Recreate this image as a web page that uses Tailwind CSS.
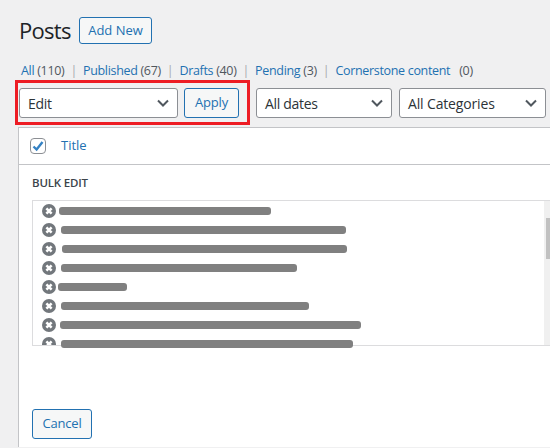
<!DOCTYPE html>
<html>
<head>
<meta charset="utf-8">
<title>Posts</title>
<script src="https://cdn.jsdelivr.net/npm/@tailwindcss/browser@4"></script>
</head>
<body class="w-[550px] h-[448px] overflow-hidden bg-[#f0f0f1] font-['Open_Sans',sans-serif] text-[13px] text-[#3c434a]">

  <div class="flex items-center h-[27px] mt-[17px] ml-[19px]">
    <h1 class="w-[60px] text-[22px] leading-[27px] text-[#1d2327] tracking-[-0.7px]">Posts</h1>
    <button class="w-[73px] h-[27px] border border-[#2271b1] rounded-[3px] bg-[#f6f7f7] text-[#2271b1] text-[13px] font-medium">Add New</button>
  </div>

  <ul class="flex items-center h-[18px] mt-[18px] ml-[21px] text-[12.5px] tracking-[-0.32px] text-[#50575e]">
    <li><a class="text-[#2271b1]">All</a> (110)<span class="mx-[6px] text-[#a7aaad]">|</span></li>
    <li><a class="text-[#2271b1]">Published</a> (67)<span class="mx-[6px] text-[#a7aaad]">|</span></li>
    <li><a class="text-[#2271b1]">Drafts</a> (40)<span class="mx-[6px] text-[#a7aaad]">|</span></li>
    <li><a class="text-[#2271b1]">Pending</a> (3)<span class="mx-[6px] text-[#a7aaad]">|</span></li>
    <li><a class="text-[#2271b1]">Cornerstone content</a><span class="ml-[9px]">(0)</span></li>
  </ul>

  <div class="flex items-start ml-[15px] w-[540px]">
    <div class="flex gap-[6px] shrink-0 w-[235px] h-[45px] border-[3px] border-[#ed1c24] pl-[1px] pt-[5px]">
      <div class="flex items-center justify-between w-[159px] h-[30px] pl-[8px] pr-[6px] bg-white border border-[#8c8f94] rounded-[3px] text-[#2c3338] text-[14px] tracking-[-0.3px]">
        <span>Edit</span>
        <svg width="16" height="16" viewBox="0 0 16 16" fill="none" stroke="#50575e" stroke-width="2"><path d="M3 5.5 8 10.5 13 5.5"/></svg>
      </div>
      <button class="w-[55px] h-[30px] border border-[#2271b1] rounded-[3px] bg-[#f6f7f7] text-[#2271b1] text-[13px] tracking-[-0.2px]">Apply</button>
    </div>
    <div class="flex items-center justify-between ml-[6px] mt-[8px] w-[136px] h-[30px] pl-[8px] pr-[6px] bg-white border border-[#8c8f94] rounded-[3px] text-[#2c3338] text-[14px] tracking-[-0.3px]">
      <span>All dates</span>
      <svg width="16" height="16" viewBox="0 0 16 16" fill="none" stroke="#50575e" stroke-width="2"><path d="M3 5.5 8 10.5 13 5.5"/></svg>
    </div>
    <div class="flex items-center justify-between ml-[7px] mt-[8px] w-[147px] h-[30px] pl-[8px] pr-[6px] bg-white border border-[#8c8f94] rounded-[3px] text-[#2c3338] text-[14px] tracking-[-0.15px]">
      <span>All Categories</span>
      <svg width="16" height="16" viewBox="0 0 16 16" fill="none" stroke="#50575e" stroke-width="2"><path d="M3 5.5 8 10.5 13 5.5"/></svg>
    </div>
  </div>

  <div class="mt-[2px] ml-[18px] w-[540px] h-[320px] bg-white border-t border-l border-[#c3c4c7]">
    <div class="flex items-center h-[37px] pl-[11px] border-b border-[#c3c4c7]">
      <span class="flex items-center justify-center w-[16px] h-[16px] bg-white border border-[#8c8f94] rounded-[4px]">
        <svg width="14" height="14" viewBox="0 0 14 14" fill="none" stroke="#3582c4" stroke-width="2.4"><path d="M2.5 7.5 5.6 10.5 11.5 3"/></svg>
      </span>
      <a class="ml-[15px] text-[#2271b1] text-[13px]">Title</a>
    </div>

    <h4 class="ml-[13px] mt-[9px] h-[18px] leading-[18px] text-[11.5px] font-semibold text-[#3c434a] tracking-[-0.2px]">BULK EDIT</h4>

    <div class="relative ml-[13px] mt-[8px] w-[530px] h-[146px]">
      <div class="h-full overflow-hidden border border-[#dcdcde] flex">
        <ul class="flex-1 flex flex-col gap-[5px] pl-[9px] pt-[3px]">
          <li class="h-[14px] shrink-0"><svg width="14" height="14" viewBox="0 0 14 14"><circle cx="7" cy="7" r="7" fill="#72777c"/><path d="M4.4 4.4 9.6 9.6M9.6 4.4 4.4 9.6" stroke="#fff" stroke-width="2.6"/></svg></li>
          <li class="h-[14px] shrink-0"><svg width="14" height="14" viewBox="0 0 14 14"><circle cx="7" cy="7" r="7" fill="#72777c"/><path d="M4.4 4.4 9.6 9.6M9.6 4.4 4.4 9.6" stroke="#fff" stroke-width="2.6"/></svg></li>
          <li class="h-[14px] shrink-0"><svg width="14" height="14" viewBox="0 0 14 14"><circle cx="7" cy="7" r="7" fill="#72777c"/><path d="M4.4 4.4 9.6 9.6M9.6 4.4 4.4 9.6" stroke="#fff" stroke-width="2.6"/></svg></li>
          <li class="h-[14px] shrink-0"><svg width="14" height="14" viewBox="0 0 14 14"><circle cx="7" cy="7" r="7" fill="#72777c"/><path d="M4.4 4.4 9.6 9.6M9.6 4.4 4.4 9.6" stroke="#fff" stroke-width="2.6"/></svg></li>
          <li class="h-[14px] shrink-0"><svg width="14" height="14" viewBox="0 0 14 14"><circle cx="7" cy="7" r="7" fill="#72777c"/><path d="M4.4 4.4 9.6 9.6M9.6 4.4 4.4 9.6" stroke="#fff" stroke-width="2.6"/></svg></li>
          <li class="h-[14px] shrink-0"><svg width="14" height="14" viewBox="0 0 14 14"><circle cx="7" cy="7" r="7" fill="#72777c"/><path d="M4.4 4.4 9.6 9.6M9.6 4.4 4.4 9.6" stroke="#fff" stroke-width="2.6"/></svg></li>
          <li class="h-[14px] shrink-0"><svg width="14" height="14" viewBox="0 0 14 14"><circle cx="7" cy="7" r="7" fill="#72777c"/><path d="M4.4 4.4 9.6 9.6M9.6 4.4 4.4 9.6" stroke="#fff" stroke-width="2.6"/></svg></li>
          <li class="h-[14px] shrink-0"><svg width="14" height="14" viewBox="0 0 14 14"><circle cx="7" cy="7" r="7" fill="#72777c"/><path d="M4.4 4.4 9.6 9.6M9.6 4.4 4.4 9.6" stroke="#fff" stroke-width="2.6"/></svg></li>
        </ul>
        <div class="w-[17px] h-full bg-[#f0f0f0] pt-[17px] pl-[2px]">
          <div class="w-[13px] h-[41px] bg-[#c1c1c1]"></div>
        </div>
      </div>
      <!-- redaction marks painted over the titles -->
      <div class="absolute left-[27px] top-[7px] w-[212px] h-[8px] rounded-[3px] bg-[#808080]"></div>
      <div class="absolute left-[29px] top-[26px] w-[285px] h-[8px] rounded-[3px] bg-[#808080]"></div>
      <div class="absolute left-[30px] top-[45px] w-[285px] h-[8px] rounded-[3px] bg-[#808080]"></div>
      <div class="absolute left-[29px] top-[64px] w-[236px] h-[8px] rounded-[3px] bg-[#808080]"></div>
      <div class="absolute left-[26px] top-[83px] w-[69px] h-[8px] rounded-[3px] bg-[#808080]"></div>
      <div class="absolute left-[29px] top-[102px] w-[248px] h-[8px] rounded-[3px] bg-[#808080]"></div>
      <div class="absolute left-[28px] top-[121px] w-[301px] h-[8px] rounded-[3px] bg-[#808080]"></div>
      <div class="absolute left-[29px] top-[140px] w-[292px] h-[8px] rounded-[3px] bg-[#808080]"></div>
    </div>

    <button class="block ml-[13px] mt-[63px] w-[60px] h-[30px] border border-[#2271b1] rounded-[3px] bg-[#f6f7f7] text-[#2271b1] text-[13px] tracking-[-0.2px]">Cancel</button>
  </div>
</body>
</html>
